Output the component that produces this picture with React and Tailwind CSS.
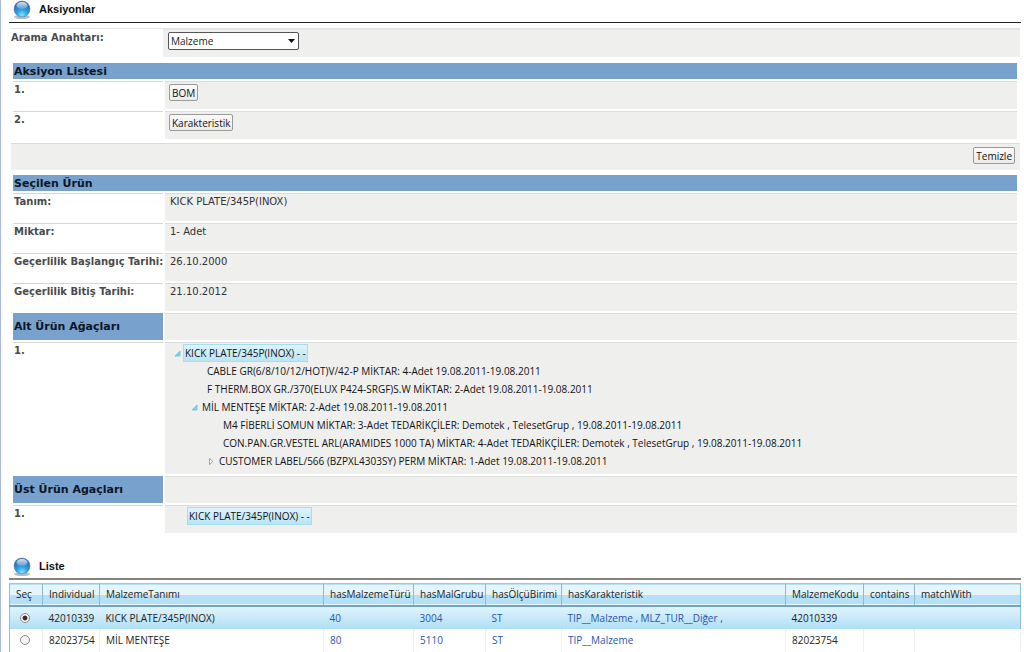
import React, { useState } from 'react';

const labelFont = "font-['DejaVu_Sans',Verdana,sans-serif]";
const uiFont = "font-['Open_Sans','Segoe_UI',sans-serif]";

const product = [
  { label: 'Tanım:', value: 'KICK PLATE/345P(INOX)' },
  { label: 'Miktar:', value: '1- Adet' },
  { label: 'Geçerlilik Başlangıç Tarihi:', value: '26.10.2000' },
  { label: 'Geçerlilik Bitiş Tarihi:', value: '21.10.2012' },
];

const tree = [
  { text: 'KICK PLATE/345P(INOX) - -', indent: 'pl-2', state: 'open', selected: true },
  { text: 'CABLE GR(6/8/10/12/HOT)V/42-P MİKTAR: 4-Adet 19.08.2011-19.08.2011', indent: 'pl-[30px]' },
  { text: 'F THERM.BOX GR./370(ELUX P424-SRGF)S.W MİKTAR: 2-Adet 19.08.2011-19.08.2011', indent: 'pl-[30px]' },
  { text: 'MİL MENTEŞE MİKTAR: 2-Adet 19.08.2011-19.08.2011', indent: 'pl-[25px]', state: 'open' },
  { text: 'M4 FİBERLİ SOMUN MİKTAR: 3-Adet TEDARİKÇİLER: Demotek , TelesetGrup , 19.08.2011-19.08.2011', indent: 'pl-[46px]' },
  { text: 'CON.PAN.GR.VESTEL ARL(ARAMIDES 1000 TA) MİKTAR: 4-Adet TEDARİKÇİLER: Demotek , TelesetGrup , 19.08.2011-19.08.2011', indent: 'pl-[46px]' },
  { text: 'CUSTOMER LABEL/566 (BZPXL4303SY) PERM MİKTAR: 1-Adet 19.08.2011-19.08.2011', indent: 'pl-[42px]', state: 'closed' },
];

const columns = [
  { name: 'Seç', width: 'w-[33px]' },
  { name: 'Individual', width: 'w-[57px]' },
  { name: 'MalzemeTanımı', width: 'w-[224px]' },
  { name: 'hasMalzemeTürü', width: 'w-[90px]' },
  { name: 'hasMalGrubu', width: 'w-[72px]' },
  { name: 'hasÖlçüBirimi', width: 'w-[76px]' },
  { name: 'hasKarakteristik', width: 'w-[224px]' },
  { name: 'MalzemeKodu', width: 'w-[78px]' },
  { name: 'contains', width: 'w-[51px]' },
  { name: 'matchWith', width: '' },
];

const items = [
  { id: '42010339', name: 'KICK PLATE/345P(INOX)', type: '40', group: '3004', unit: 'ST', traits: 'TIP__Malzeme , MLZ_TUR__Diğer ,' },
  { id: '82023754', name: 'MİL MENTEŞE', type: '80', group: '5110', unit: 'ST', traits: 'TIP__Malzeme' },
];

const Orb = ({ id }) => (
  <svg width="20" height="20" viewBox="0 0 20 20" aria-hidden="true">
    <defs>
      <radialGradient id={`${id}-ball`} cx="50%" cy="88%" r="85%">
        <stop offset="0" stopColor="#7fe6ff" />
        <stop offset="0.4" stopColor="#2f9fe0" />
        <stop offset="0.8" stopColor="#2a6fb8" />
        <stop offset="1" stopColor="#3a66a0" />
      </radialGradient>
      <linearGradient id={`${id}-shine`} x1="0" y1="0" x2="0" y2="1">
        <stop offset="0" stopColor="#fff" stopOpacity="0.85" />
        <stop offset="1" stopColor="#fff" stopOpacity="0.15" />
      </linearGradient>
    </defs>
    <ellipse cx="9" cy="17" rx="8" ry="2" fill="#b9bcc0" />
    <circle cx="9" cy="9" r="8" fill={`url(#${id}-ball)`} stroke="#5c7fa8" strokeWidth="0.6" />
    <ellipse cx="9" cy="5.5" rx="5.5" ry="3.6" fill={`url(#${id}-shine)`} />
  </svg>
);

const Title = ({ id, border, children }) => (
  <div className={`flex h-[23px] items-start gap-1.5 pl-1 ${border}`}>
    <Orb id={id} />
    <h2 className="text-[11px] leading-[18px] font-bold text-[#111]">{children}</h2>
  </div>
);

const Band = ({ children }) => (
  <h3 className={`h-4 bg-[#79a1cd] pl-px text-[11px] leading-[18px] font-bold text-[#0b1626] ${labelFont}`}>{children}</h3>
);

const Row = ({ label, children, height = 'min-h-7' }) => (
  <div className={`flex gap-0.5 ${height}`}>
    <div className={`w-[150px] shrink-0 border-t border-[#d6d6d6] pl-px text-[10px] leading-4 font-bold whitespace-nowrap text-[#4a4a4a] ${labelFont}`}>
      {label}
    </div>
    <div className="min-w-0 flex-1 border-t border-[#dcdcdc] bg-[#efefee]">{children}</div>
  </div>
);

const SideBand = ({ children }) => (
  <div className="flex h-[27px] gap-0.5">
    <h3 className={`w-[150px] shrink-0 bg-[#79a1cd] pl-px text-[11px] leading-7 font-bold text-[#0b1626] ${labelFont}`}>{children}</h3>
    <div className="flex-1 border-t border-[#dcdcdc] bg-[#efefee]" />
  </div>
);

const Button = ({ children }) => (
  <button
    type="button"
    className={`h-[17px] rounded-[2px] border border-[#9a9a9a] bg-linear-to-b from-[#fafafa] to-[#ececec] px-0.5 text-[10px] leading-[14px] text-[#111] ${uiFont}`}
  >
    {children}
  </button>
);

const Toggle = ({ state }) => (
  <svg width="7" height="7" viewBox="0 0 7 7" aria-hidden="true" className="shrink-0">
    {state === 'open' && <path d="M6 1v5H1z" fill="#7fd3ee" stroke="#5cc4e6" strokeWidth="0.8" />}
    {state === 'closed' && <path d="M1.5 0.5v6L5 3.5z" fill="#fff" stroke="#8a8a8a" strokeWidth="0.8" />}
  </svg>
);

const nodeSelected = 'border-[#a5def0] bg-linear-to-b from-[#dff3fb] to-[#b9e5f6]';

const App = () => {
  const [selected, setSelected] = useState('42010339');

  return (
    <div className="min-h-screen border-l border-[#a9b9dc] bg-white pr-[3px] pl-2 font-['Liberation_Sans',Arial,sans-serif] text-[#222]">
      <Title id="actions" border="border-b border-[#222]">Aksiyonlar</Title>

      <section className="pt-[5px]">
        {/* Search key */}
        <div className="mr-px ml-0.5 flex h-[29px]">
          <label
            htmlFor="search-key"
            className={`w-[152px] shrink-0 border-t border-[#e2e2e2] pt-px text-[10px] leading-4 font-bold text-[#4a4a4a] ${labelFont}`}
          >
            Arama Anahtarı:
          </label>
          <div className="flex-1 border-t-2 border-[#e4e4e4] bg-[#efefee] pt-0.5 pl-[5px]">
            <div className="relative w-[131px]">
              <select
                id="search-key"
                className={`block h-[18px] w-full appearance-none rounded-[2px] border border-[#555] bg-white pr-4 pl-0.5 text-[10px] leading-4 text-[#222] ${uiFont}`}
              >
                <option>Malzeme</option>
              </select>
              <svg width="7" height="4" viewBox="0 0 7 4" aria-hidden="true" className="pointer-events-none absolute top-[7px] right-1">
                <path d="M0 0h7L3.5 4z" fill="#111" />
              </svg>
            </div>
          </div>
        </div>

        {/* Actions */}
        <div className="mt-1.5 mr-1 ml-1 flex flex-col gap-0.5">
          <Band>Aksiyon Listesi</Band>
          <Row label="1.">
            <div className="flex pt-0.5 pl-1"><Button>BOM</Button></div>
          </Row>
          <Row label="2.">
            <div className="flex pt-0.5 pl-1"><Button>Karakteristik</Button></div>
          </Row>
        </div>
        <div className="mt-1 mr-px ml-0.5 flex h-[27px] justify-end border-t border-[#dcdcdc] bg-[#efefee] pt-[3px] pr-[5px]">
          <Button>Temizle</Button>
        </div>

        {/* Selected product */}
        <div className="mt-[5px] mr-1 ml-1 flex flex-col gap-0.5">
          <Band>Seçilen Ürün</Band>
          {product.map((field) => (
            <Row key={field.label} label={field.label}>
              <p className={`pl-[5px] text-[10px] leading-4 text-[#333] ${labelFont}`}>{field.value}</p>
            </Row>
          ))}
          <SideBand>Alt Ürün Ağaçları</SideBand>
          <Row label="1." height="min-h-[132px]">
            <ul className={`pt-px pl-px text-[10px] text-[#111] ${uiFont}`}>
              {tree.map((node) => (
                <li key={node.text} className={`flex h-[18px] items-center gap-0.5 whitespace-nowrap ${node.indent}`}>
                  <Toggle state={node.state} />
                  <span className={`border px-px leading-4 ${node.selected ? nodeSelected : 'border-transparent'}`}>{node.text}</span>
                </li>
              ))}
            </ul>
          </Row>
          <SideBand>Üst Ürün Agaçları</SideBand>
          <Row label="1.">
            <div className={`flex pt-px pl-[22px] text-[10px] text-[#111] ${uiFont}`}>
              <span className={`border px-px leading-4 ${nodeSelected}`}>KICK PLATE/345P(INOX) - -</span>
            </div>
          </Row>
        </div>
      </section>

      <section className="pt-6">
        <Title id="list" border="border-b-2 border-[#85827f]">Liste</Title>

        <table className={`mt-[3px] w-full table-fixed border-collapse border-x border-[#8fbdd8] text-[10px] leading-4 ${uiFont}`}>
          <thead>
            <tr className="h-[22px] border-t border-b-2 border-t-[#a9c4d4] border-b-[#6fa5c8] bg-linear-to-b from-[#e6f5fc] from-50% via-[#b5e0f5] via-55% to-[#b5e0f5]">
              {columns.map((col) => (
                <th key={col.name} scope="col" className={`border-r border-[#8fb9d0] p-0 pl-1.5 text-left font-normal whitespace-nowrap text-[#222] last:border-r-0 ${col.width}`}>
                  {col.name}
                </th>
              ))}
            </tr>
          </thead>
          <tbody>
            {items.map((item) => (
              <tr
                key={item.id}
                className={`h-[23px] whitespace-nowrap text-[#222] [&>td]:p-0 [&>td]:pl-1.5 ${
                  selected === item.id ? 'bg-linear-to-b from-[#e3f4fc] to-[#aedff5]' : '[&>td]:border-r [&>td]:border-[#f0f0f0]'
                }`}
              >
                <td>
                  <input
                    type="radio"
                    name="item"
                    aria-label={item.id}
                    checked={selected === item.id}
                    onChange={() => setSelected(item.id)}
                    className="ml-1 block size-2.5 appearance-none rounded-full border border-[#8a8a8a] bg-[#f4f4f4] checked:bg-[radial-gradient(circle,#3a2a2a_35%,#f4f4f4_50%)]"
                  />
                </td>
                <td>{item.id}</td>
                <td>{item.name}</td>
                <td className="text-[#2a55b0]">{item.type}</td>
                <td className="text-[#2a55b0]">{item.group}</td>
                <td className="text-[#2a55b0]">{item.unit}</td>
                <td className="text-[#2a55b0]">{item.traits}</td>
                <td>{item.id}</td>
                <td />
                <td />
              </tr>
            ))}
          </tbody>
        </table>
      </section>
    </div>
  );
};

export default App;
